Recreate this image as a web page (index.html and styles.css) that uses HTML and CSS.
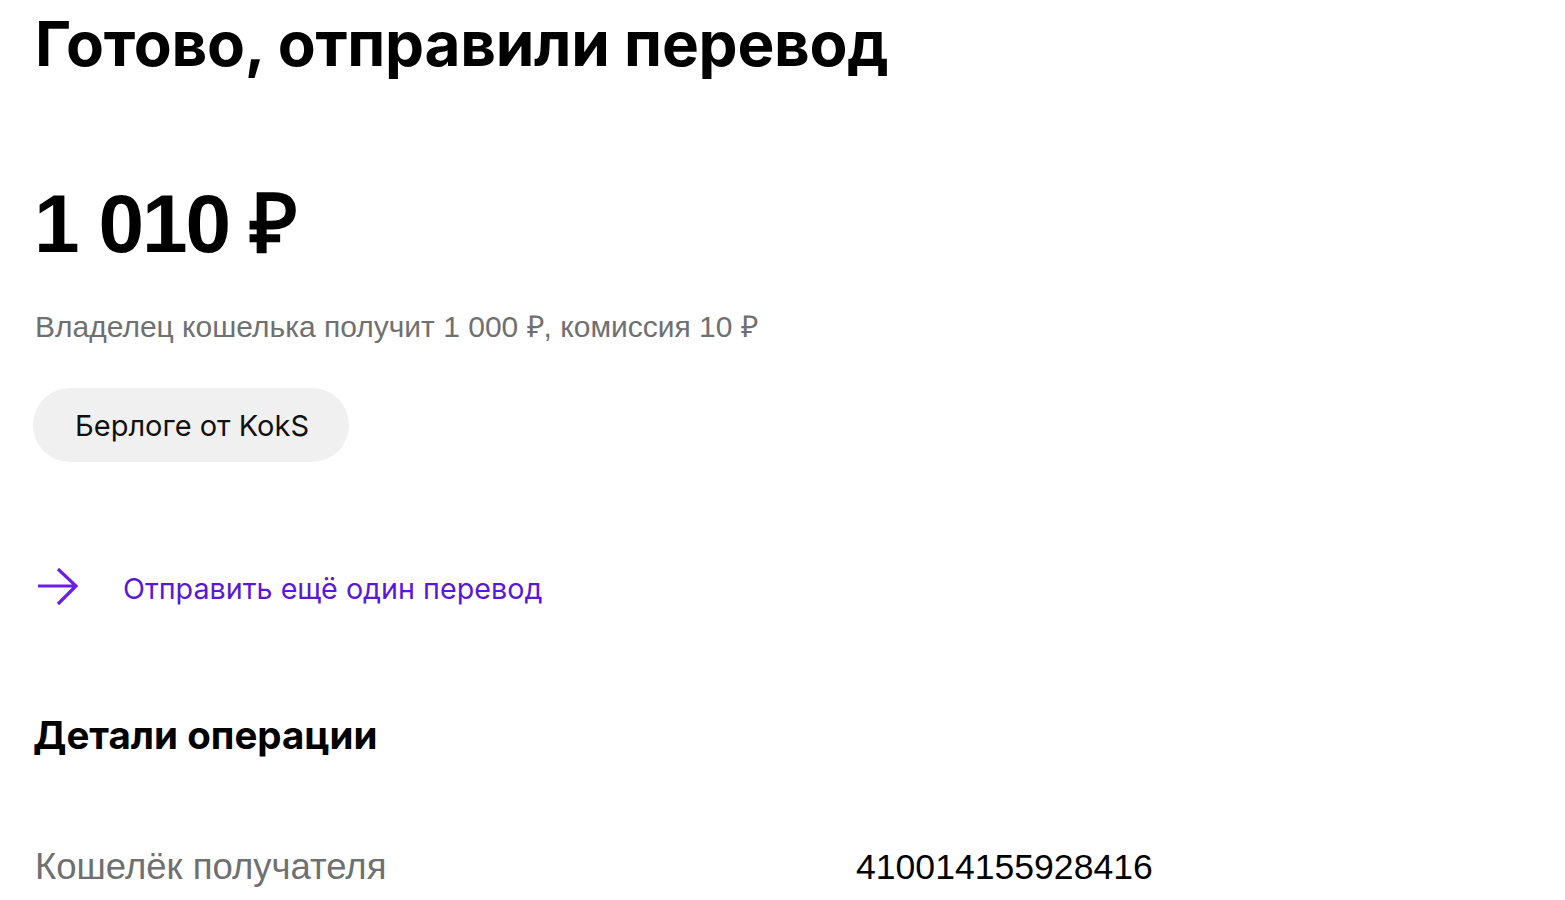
FILE: index.html
```html
<!DOCTYPE html>
<html lang="ru">
<head>
  <meta charset="UTF-8" />
  <meta name="viewport" content="width=device-width, initial-scale=1" />
  <title>Перевод отправлен</title>
  <link rel="stylesheet" href="styles.css">
</head>
<body>
  <main class="page">
    <h1 class="title">Готово, отправили перевод</h1>

    <div class="amount">1 010 ₽</div>
    <p class="note">Владелец кошелька получит 1 000 ₽, комиссия 10 ₽</p>
    <div class="chip">Берлоге от KokS</div>

    <a class="again" href="#">
      <svg class="again-icon" width="42" height="40" viewBox="0 0 42 40" fill="none">
        <path d="M1 18h38M21 1l18 17-18 18" stroke="currentColor" stroke-width="3.2"/>
      </svg>
      <span>Отправить ещё один перевод</span>
    </a>

    <h2 class="details-title">Детали операции</h2>

    <div class="row">
      <span class="row-label">Кошелёк получателя</span>
      <span class="row-value">410014155928416</span>
    </div>
  </main>
</body>
</html>
```

FILE: styles.css
```css
body {
  margin: 0;
  background: #fff;
  color: #000;
  font-family: Inter, "Noto Sans", sans-serif;
}
.page {
  padding: 0 33px;
  display: flex;
  flex-direction: column;
  align-items: flex-start;
}
.title {
  margin: 4px 0 0 2px;
  font-size: 62px;
  font-weight: 700;
  line-height: 80px;
  letter-spacing: -0.25px;
}
.amount {
  margin: 92px 0 0 1px;
  font-family: "Liberation Sans", Arial, sans-serif;
  font-size: 82px;
  font-weight: 700;
  line-height: 96px;
  letter-spacing: -2px;
}
.note {
  margin: 37px 0 0 2px;
  font-family: "Liberation Sans", Arial, sans-serif;
  font-size: 30px;
  line-height: 36px;
  color: #707070;
}
.chip {
  margin-top: 43px;
  padding: 0 40px 0 42px;
  height: 74px;
  display: flex;
  align-items: center;
  background: #f0f0f0;
  border-radius: 37px;
  font-size: 29px;
  color: #111;
}
.again {
  margin: 106px 0 0 4px;
  display: flex;
  align-items: center;
  gap: 44px;
  color: #5a17d9;
  text-decoration: none;
  font-size: 28.7px;
}
.again-icon {
  color: #6b1fe4;
}
.details-title {
  margin: 104px 0 0 0;
  font-size: 38.5px;
  font-weight: 700;
  line-height: 46px;
}
.row {
  margin-top: 88px;
  display: flex;
  width: 100%;
  align-items: center;
}
.row-label {
  width: 821px;
  padding-left: 2px;
  font-family: "Liberation Sans", Arial, sans-serif;
  font-size: 36.5px;
  color: #707070;
}
.row-value {
  font-family: "Liberation Sans", Arial, sans-serif;
  font-size: 35.6px;
  color: #000;
}
```
